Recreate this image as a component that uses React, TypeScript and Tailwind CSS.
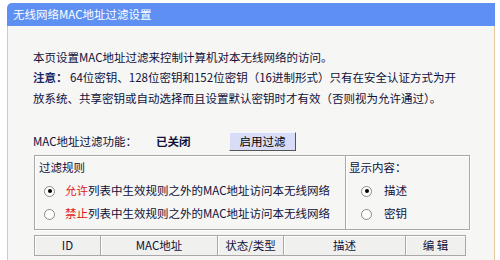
const font = { fontFamily: '"Noto Sans CJK SC", "Liberation Sans", sans-serif' };

function Radio({ checked }: { checked?: boolean }) {
  return (
    <span className="inline-flex w-[11px] h-[11px] rounded-full border border-[#8a8a8a] bg-white items-center justify-center shrink-0">
      {checked && <span className="w-[4px] h-[4px] rounded-full bg-black" />}
    </span>
  );
}

const cols = [
  { label: "ID", w: "w-[67px]" },
  { label: "MAC地址", w: "w-[118px]" },
  { label: "状态/类型", w: "w-[67px]" },
  { label: "描述", w: "w-[123px]" },
  { label: "编 辑", w: "w-[61px]" },
];

export default function App() {
  return (
    <div className="w-[500px] h-[260px] bg-white overflow-hidden text-[11.5px] text-[#10103a] whitespace-nowrap" style={font}>
      <div className="ml-[7px] mr-[5px] mt-[3px]">
        <div className="h-[23px] bg-[#5e8ff2] rounded-tl-[5px] text-white text-[11.5px] leading-[23px] pl-[6px]">
          无线网络MAC地址过滤设置
        </div>
        <div className="h-[240px] bg-[#f6f6f4] border-l border-r border-[#e6c69c] pl-[25px] pt-[21px]">
          <div className="leading-[20px] h-[20px]">本页设置MAC地址过滤来控制计算机对本无线网络的访问。</div>
          <div className="leading-[21px] h-[21px]">
            <span className="font-bold text-[#1a2a6a]">注意：</span>
            {" "}64位密钥、128位密钥和152位密钥（16进制形式）只有在安全认证方式为开
          </div>
          <div className="leading-[21px] h-[21px]">放系统、共享密钥或自动选择而且设置默认密钥时才有效（否则视为允许通过）。</div>

          <div className="flex items-center mt-[23px] h-[19px] leading-none">
            <span className="w-[123px]">MAC地址过滤功能：</span>
            <span className="font-bold w-[73px]">已关闭</span>
            <span className="h-[19px] w-[67px] flex items-center justify-center bg-[#d9dcf6] border border-t-[#f4f4ff] border-l-[#f4f4ff] border-r-[#555] border-b-[#555] text-black">
              启用过滤
            </span>
          </div>

          <div className="flex mt-[4px] ml-[1px] w-[436px] h-[75px]">
            <div className="w-[312px] border border-[#a8a8a8] shadow-[inset_1px_1px_0_#fff,1px_1px_0_#fff] pl-[4px] pt-[2px]">
              <div className="leading-[18px] h-[18px]">过滤规则</div>
              <div className="flex items-center gap-[10px] pl-[5px] mt-[5px] h-[20px] leading-none">
                <Radio checked />
                <span><span className="text-[#e01818]">允许</span>列表中生效规则之外的MAC地址访问本无线网络</span>
              </div>
              <div className="flex items-center gap-[10px] pl-[5px] mt-[3px] h-[20px] leading-none">
                <Radio />
                <span><span className="text-[#e01818]">禁止</span>列表中生效规则之外的MAC地址访问本无线网络</span>
              </div>
            </div>
            <div className="flex-1 border border-l-0 border-[#a8a8a8] shadow-[inset_1px_1px_0_#fff,1px_1px_0_#fff] pl-[3px] pt-[2px]">
              <div className="leading-[18px] h-[18px]">显示内容：</div>
              <div className="flex items-center gap-[12px] pl-[12px] mt-[5px] h-[20px] leading-none">
                <Radio checked />
                <span>描述</span>
              </div>
              <div className="flex items-center gap-[12px] pl-[12px] mt-[3px] h-[20px] leading-none">
                <Radio />
                <span>密钥</span>
              </div>
            </div>
          </div>

          <div className="flex mt-[5px] ml-[1px] h-[21px]">
            {cols.map((c) => (
              <div
                key={c.label}
                className={`${c.w} h-[21px] leading-none flex items-center justify-center bg-[#f0f0ee] border border-[#a8a8a8] shadow-[inset_1px_1px_0_#fff] -ml-px first:ml-0`}
              >
                {c.label}
              </div>
            ))}
          </div>
        </div>
      </div>
    </div>
  );
}
